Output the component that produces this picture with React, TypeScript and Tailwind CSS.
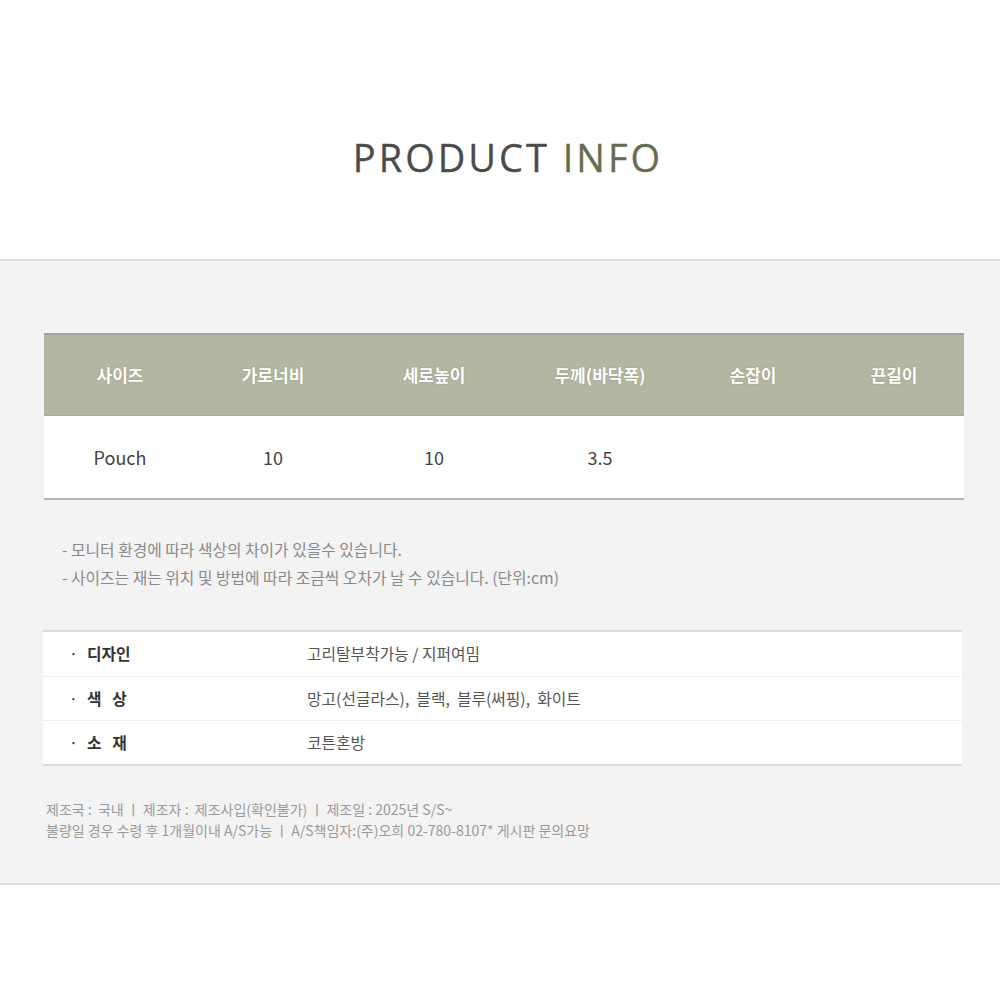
import React from 'react';

const FONT = "font-['Noto_Sans_CJK_KR','Noto_Sans',sans-serif]";

const sizeHead = ['사이즈', '가로너비', '세로높이', '두께(바닥폭)', '손잡이', '끈길이'];
const sizeRow = ['Pouch', '10', '10', '3.5', '', ''];

const details = [
  { label: '디자인', value: '고리탈부착가능 / 지퍼여밈' },
  { label: '색\u00a0\u00a0\u00a0상', value: '망고(선글라스),\u00a0\u00a0블랙,\u00a0\u00a0블루(써핑),\u00a0\u00a0화이트' },
  { label: '소\u00a0\u00a0\u00a0재', value: '코튼혼방' },
];

const App: React.FC = () => {
  return (
    <div className={`w-[1000px] h-[984px] bg-white ${FONT}`}>
      {/* title */}
      <div className="h-[259px] flex items-center justify-center pt-[55px]">
        <h1 className="ml-[16px] font-['Open_Sans',sans-serif] text-[38px] tracking-[3px] text-[#4b4b4b] [-webkit-text-stroke:0.3px_currentColor]">
          PRODUCT <span className="text-[#676c4e]">INFO</span>
        </h1>
      </div>

      <section className="bg-[#f3f3f3] border-t-2 border-b-2 border-[#dedede] pt-[72px] pb-[42px]">
        {/* size table */}
        <div className="mx-[44px] w-[920px] border-t-2 border-b-2 border-t-[#a0a0a0] border-b-[#b2b2b2]">
          <div className="grid grid-cols-[152px_154px_168px_164px_142px_140px] h-[81px] bg-[#b3b6a0] border-b border-[#a7a99a]">
            {sizeHead.map((h) => (
              <div
                key={h}
                className="flex items-center justify-center text-[17px] font-bold text-white [text-shadow:0_0_2px_rgba(0,0,0,0.18)]"
              >
                {h}
              </div>
            ))}
          </div>
          <div className="grid grid-cols-[152px_154px_168px_164px_142px_140px] h-[82px] bg-white">
            {sizeRow.map((v, i) => (
              <div key={i} className="flex items-center justify-center text-[18px] text-[#444]">
                {v}
              </div>
            ))}
          </div>
        </div>

        {/* notes */}
        <div className="mt-[36px] pl-[62px] text-[15.8px] leading-[28px] text-[#8a8a8a]">
          <p>- 모니터 환경에 따라 색상의 차이가 있을수 있습니다.</p>
          <p>- 사이즈는 재는 위치 및 방법에 따라 조금씩 오차가 날 수 있습니다. (단위:cm)</p>
        </div>

        {/* details */}
        <div className="mt-[38px] mx-[43px] w-[919px] border-t-2 border-b-2 border-[#dcdcdc] bg-white">
          {details.map((d, i) => (
            <div
              key={i}
              className={`flex items-center h-[44px] text-[15.8px] ${i > 0 ? 'border-t border-[#efefef]' : ''}`}
            >
              <div className="w-[264px] pl-[26px] font-bold text-[#333]">
                <span className="mr-[9px] font-normal">·</span>
                {d.label}
              </div>
              <div className="text-[#555]">{d.value}</div>
            </div>
          ))}
        </div>

        {/* footer */}
        <div className="mt-[33px] pl-[46px] text-[14px] leading-[21px] text-[#9a9a9a]">
          <p>제조국 :&nbsp; 국내 ㅣ 제조자 :&nbsp; 제조사입(확인불가) ㅣ 제조일 : 2025년 S/S~</p>
          <p>불량일 경우 수령 후 1개월이내 A/S가능 ㅣ A/S책임자:(주)오희 02-780-8107* 게시판 문의요망</p>
        </div>
      </section>
    </div>
  );
};

export default App;
